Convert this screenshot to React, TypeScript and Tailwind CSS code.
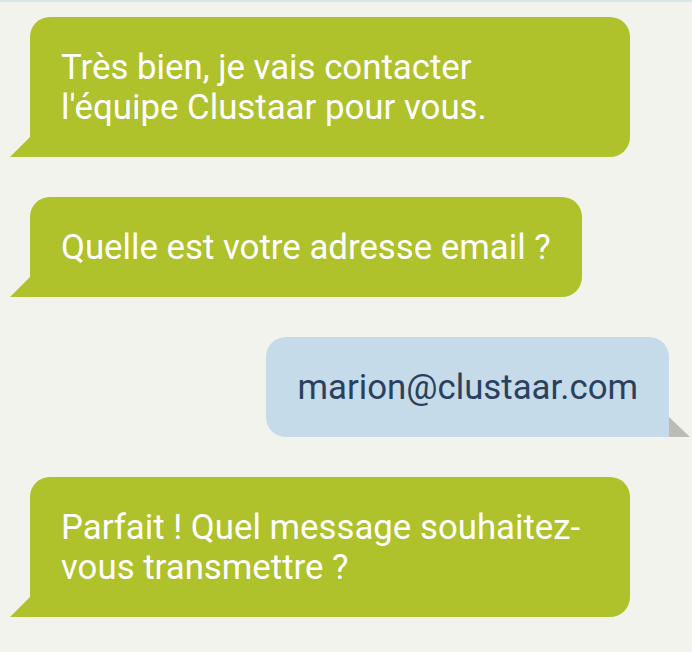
import React from "react";

function Left({ children }: { children: React.ReactNode }) {
  return (
    <div className="flex justify-start pl-[30px]">
      <div className="relative max-w-[600px] rounded-[20px] rounded-bl-none bg-[#afc12b] px-[31px] py-[30px] text-[34.8px] leading-[40px] text-white">
        {children}
        <svg className="absolute bottom-0 left-[-20px]" width="20" height="20" viewBox="0 0 20 20">
          <polygon points="0,20 20,0 20,20" fill="#afc12b" />
        </svg>
      </div>
    </div>
  );
}

function Right({ children }: { children: React.ReactNode }) {
  return (
    <div className="flex justify-end pr-[23px]">
      <div className="relative max-w-[600px] rounded-[20px] rounded-br-none bg-[#c5dbe9] px-[31px] py-[30px] text-[34.8px] leading-[40px] text-[#2b405c]">
        {children}
        <svg className="absolute bottom-0 right-[-21px]" width="21" height="20" viewBox="0 0 21 20">
          <polygon points="0,0 21,20 0,20" fill="#bdbcb4" />
        </svg>
      </div>
    </div>
  );
}

export default function App() {
  return (
    <div
      className="h-[652px] w-[692px] overflow-hidden border-t-2 border-[#d9e4ec] bg-[#f3f3ed]"
      style={{ fontFamily: "Roboto, 'Liberation Sans', sans-serif" }}
    >
      <div className="flex flex-col gap-[40px] pt-[15px]">
        <Left>
          <div className="w-[538px]">
            Très bien, je vais contacter
            <br />
            l'équipe Clustaar pour vous.
          </div>
        </Left>
        <Left>Quelle est votre adresse email ?</Left>
        <Right>marion@clustaar.com</Right>
        <Left>
          <div className="w-[538px]">Parfait ! Quel message souhaitez-vous transmettre ?</div>
        </Left>
      </div>
    </div>
  );
}
